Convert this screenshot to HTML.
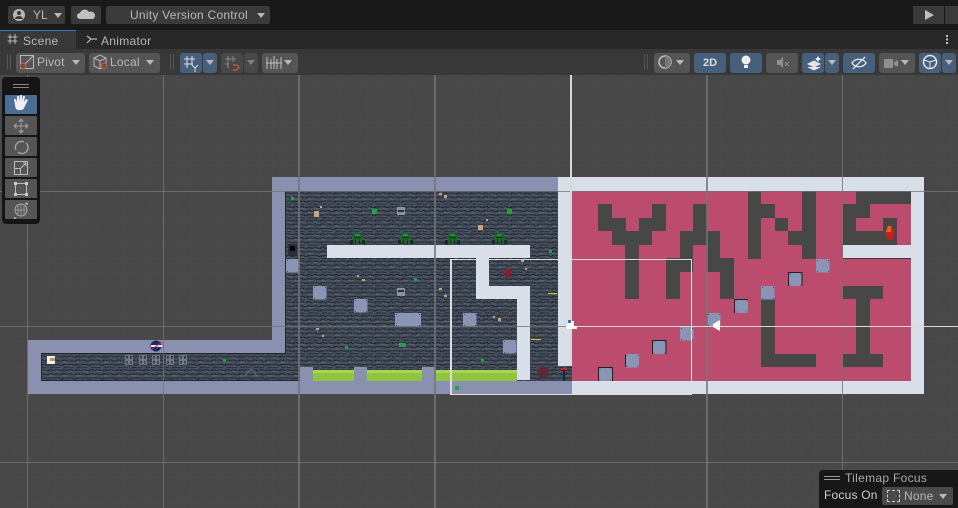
<!DOCTYPE html>
<html><head><meta charset="utf-8">
<style>
html,body{margin:0;padding:0;background:#484848}
#r{position:relative;width:958px;height:508px;overflow:hidden;font-family:"Liberation Sans",sans-serif;color:#b8b8b8;font-size:12px}
.a{position:absolute}
.b{position:absolute;height:20px;background:#555;border-radius:3px;top:53px}
.bl{background:#46607c}
.t{position:absolute;white-space:nowrap;line-height:14px}
.c{position:absolute;width:0;height:0;border-left:4px solid transparent;border-right:4px solid transparent;border-top:5px solid #b8b8b8}
.tb{position:absolute;left:5px;width:32px;height:19px;background:#555;border-radius:1px}
svg{position:absolute;left:0;top:0;overflow:visible}
</style></head><body><div id="r">
<svg width="958" height="508" viewBox="0 0 958 508" shape-rendering="crispEdges">
<defs>
<pattern id="minor" width="13.57" height="13.57" patternUnits="userSpaceOnUse" patternTransform="translate(1.1 1.1)">
<path d="M0 0H13.57M0 0V13.57" stroke="#4b4b4b" stroke-width="1" fill="none"/>
</pattern>
<pattern id="tex" width="13.6" height="13.6" patternUnits="userSpaceOnUse" patternTransform="translate(286 191)">
<rect width="14" height="14" fill="#454e5c"/>
<path d="M0 2h4v1h4v-1h3v1h3M0 6h3v1h5v-1h3v1h3M0 10h5v1h3v-1h6M1 13h4v1h4v-1h5" stroke="#262a32" stroke-width="1" fill="none"/>
<path d="M1 4h5M8 8h5M2 12h4" stroke="#566071" stroke-width="1" fill="none"/>
</pattern>
<symbol id="k" width="14" height="14" viewBox="0 0 14 14" overflow="visible">
<rect width="13.500" height="13.500" fill="#8a94b4"/>
<g fill="#4a4e58"><rect x="1" y="1" width="1" height="1"/><rect x="12" y="1" width="1" height="1"/><rect x="1" y="12" width="1" height="1"/><rect x="12" y="12" width="1" height="1"/></g>
</symbol>
<symbol id="sp" width="17" height="12" viewBox="0 0 17 12" overflow="visible">
<rect x="4" y="0" width="9" height="4" fill="#1a5f28"/><rect x="3" y="3" width="11" height="6" fill="#1b6a2b"/><rect x="6" y="1" width="5" height="2" fill="#2a8a3c"/>
<g fill="#0f3318"><rect x="1" y="7" width="3" height="4"/><rect x="13" y="7" width="3" height="4"/><rect x="6" y="6" width="1" height="5"/><rect x="10" y="6" width="1" height="5"/><rect x="5" y="4" width="7" height="1"/></g>
</symbol>
</defs>
<rect width="958" height="508" fill="#484848"/>
<rect width="958" height="508" fill="url(#minor)"/>
<!-- dark background -->
<rect x="41" y="353" width="245" height="28" fill="url(#tex)"/>
<rect x="286" y="191" width="286" height="190" fill="url(#tex)"/>
<!-- purple walls -->
<g fill="#8a90b0">
<rect x="272" y="177" width="286" height="14"/>
<rect x="272" y="177" width="14" height="176"/>
<rect x="28" y="340" width="258" height="13"/>
<rect x="28" y="340" width="13" height="54"/>
<rect x="28" y="381" width="544" height="13"/>
<rect x="300" y="367" width="13" height="14"/><rect x="354" y="367" width="13" height="14"/><rect x="422" y="367" width="13" height="14"/>
</g>
<g fill="#23262c"><rect x="285" y="191" width="1" height="162"/><rect x="41" y="353" width="245" height="1"/><rect x="41" y="380" width="259" height="1"/><rect x="41" y="353" width="1" height="28"/><rect x="286" y="191" width="272" height="1"/></g>
<use href="#k" x="286" y="259"/><use href="#k" x="313" y="286"/><use href="#k" x="354" y="299"/><use href="#k" x="463" y="313"/><use href="#k" x="503" y="340"/>
<rect x="395" y="313" width="26" height="13.500" fill="#8a94b4"/>
<g fill="#4a4e58"><rect x="396" y="314" width="1" height="1"/><rect x="419" y="314" width="1" height="1"/><rect x="396" y="325" width="1" height="1"/><rect x="419" y="325" width="1" height="1"/></g>
<!-- acid -->
<g fill="#8fc542"><rect x="313" y="371" width="41" height="10"/><rect x="367" y="371" width="55" height="10"/><rect x="435" y="371" width="82" height="10"/></g>
<g fill="#a9d64f"><rect x="313" y="370" width="41" height="3"/><rect x="367" y="370" width="55" height="3"/><rect x="435" y="370" width="82" height="3"/></g>
<!-- pink room -->
<rect x="572" y="191" width="339" height="190" fill="#bb4c6e"/>
<g fill="#474747">
<rect x="598" y="204" width="14" height="27"/><rect x="612" y="218" width="14" height="27"/><rect x="625" y="231" width="14" height="68"/><rect x="639" y="218" width="13" height="27"/><rect x="652" y="204" width="14" height="27"/>
<rect x="693" y="204" width="14" height="41"/><rect x="680" y="231" width="13" height="41"/><rect x="666" y="258" width="14" height="41"/><rect x="707" y="231" width="13" height="41"/><rect x="720" y="258" width="14" height="41"/>
<rect x="748" y="191" width="13" height="68"/><rect x="761" y="204" width="14" height="14"/><rect x="775" y="218" width="13" height="13"/><rect x="788" y="231" width="14" height="14"/><rect x="802" y="191" width="14" height="68"/>
<rect x="856" y="191" width="55" height="13"/><rect x="843" y="204" width="27" height="14"/><rect x="843" y="218" width="13" height="13"/><rect x="843" y="231" width="54" height="14"/><rect x="883" y="218" width="14" height="13"/>
<rect x="761" y="299" width="14" height="68"/><rect x="775" y="354" width="41" height="13"/>
<rect x="843" y="286" width="40" height="13"/><rect x="856" y="299" width="14" height="55"/><rect x="843" y="354" width="40" height="13"/>
</g>
<!-- white walls -->
<g fill="#d9dfe9">
<rect x="558" y="177" width="366" height="14"/><rect x="911" y="177" width="13" height="217"/><rect x="572" y="381" width="352" height="13"/>
<rect x="558" y="191" width="14" height="175"/>
<rect x="843" y="245" width="68" height="13"/>
<rect x="327" y="245" width="203" height="13"/><rect x="476" y="258" width="13" height="41"/><rect x="476" y="286" width="54" height="13"/><rect x="517" y="286" width="13" height="94"/>
</g>
<rect x="843" y="258" width="68" height="1" fill="#3a3a3a"/>
<!-- blocks in pink -->
<use href="#k" x="598.500" y="367.500"/><use href="#k" x="625.500" y="354"/><use href="#k" x="652.500" y="340.500"/><use href="#k" x="680" y="327"/><use href="#k" x="707" y="313"/><use href="#k" x="734.500" y="299.500"/><use href="#k" x="761" y="286"/><use href="#k" x="816" y="259"/><use href="#k" x="788.500" y="272.500"/>
<g fill="none" stroke="#202228" stroke-width="1">
<path d="M598.500 381V367.500H612.500V381M625.500 367V354.500M652.500 354V340.500H666V354M734.500 313V299.500H748M788.500 286V272.500H802V286"/>
</g>
<!-- objects -->
<use href="#sp" x="349" y="233"/><use href="#sp" x="397" y="233"/><use href="#sp" x="444" y="233"/><use href="#sp" x="491" y="233"/>
<g fill="#1fa53a"><rect x="372" y="209" width="5" height="5"/><rect x="507" y="209" width="5" height="5"/><rect x="414" y="278" width="3" height="3"/><rect x="291" y="197" width="3" height="3"/><rect x="549" y="250" width="3" height="3"/><rect x="345" y="346" width="3" height="3"/><rect x="481" y="359" width="3" height="3"/><rect x="223" y="359" width="3" height="3"/><rect x="455" y="386" width="4" height="4"/></g>
<g><rect x="397" y="207" width="8" height="8" fill="#8b90a8"/><rect x="398" y="210" width="6" height="2" fill="#2a2d36"/><rect x="397" y="288" width="8" height="8" fill="#8b90a8"/><rect x="398" y="290" width="6" height="2" fill="#2a2d36"/></g>
<g fill="#c9a47d"><rect x="314" y="211" width="5" height="6"/><rect x="478" y="225" width="5" height="5"/><rect x="320" y="206" width="2" height="2"/><rect x="486" y="219" width="2" height="2"/><rect x="444" y="195" width="3" height="3"/><rect x="439" y="193" width="3" height="2"/><rect x="362" y="279" width="3" height="2"/><rect x="357" y="275" width="2" height="2"/><rect x="439" y="288" width="3" height="2"/><rect x="444" y="295" width="3" height="2"/><rect x="498" y="318" width="3" height="3"/><rect x="493" y="316" width="2" height="2"/><rect x="316" y="328" width="3" height="2"/><rect x="322" y="335" width="2" height="2"/><rect x="521" y="260" width="3" height="2"/><rect x="525" y="268" width="2" height="2"/></g>
<rect x="288" y="244" width="9" height="12" fill="#2a2e36"/><rect x="290" y="246" width="5" height="5" fill="#000"/>
<rect x="505" y="269" width="6" height="8" fill="#8c1c2c"/>
<g fill="#2d9a62"><rect x="399" y="343" width="7" height="4"/></g>
<g fill="#d8c23a"><rect x="548" y="293" width="9" height="1"/><rect x="531" y="339" width="10" height="1"/></g>
<g fill="#5a2a38"><circle cx="543" cy="372" r="6"/></g>
<rect x="561" y="368" width="6" height="2" fill="#d81e26"/><rect x="563" y="370" width="2" height="11" fill="#1c2a2a"/>
<path d="M887 226h5l2 5v7l-3 2h-3l-2-4z" fill="#c32020" shape-rendering="auto"/><path d="M888 226h3v6h-5z" fill="#ea6018" shape-rendering="auto"/>
<!-- astronaut & badge -->
<rect x="47" y="356" width="8" height="8" fill="#eee"/><rect x="50" y="358" width="5" height="3" fill="#d2923f"/>
<circle cx="156" cy="346" r="5.500" fill="#1c2a66" shape-rendering="auto"/><rect x="151" y="345" width="11" height="2" fill="#e9e9f2"/><path d="M151 350L162 342" stroke="#d8232a" stroke-width="1" shape-rendering="auto"/>
<g fill="none" stroke="#737887">
<path d="M125.500 355.500h3v4h-3zM129.500 355.500h3v4h-3zM125.500 360.500h3v4h-3zM129.500 360.500h3v4h-3z"/>
<path d="M139.500 355.500h3v4h-3zM143.500 355.500h3v4h-3zM139.500 360.500h3v4h-3zM143.500 360.500h3v4h-3z"/>
<path d="M152.500 355.500h3v4h-3zM156.500 355.500h3v4h-3zM152.500 360.500h3v4h-3zM156.500 360.500h3v4h-3z"/>
<path d="M166.500 355.500h3v4h-3zM170.500 355.500h3v4h-3zM166.500 360.500h3v4h-3zM170.500 360.500h3v4h-3z"/>
<path d="M179.500 355.500h3v4h-3zM183.500 355.500h3v4h-3zM179.500 360.500h3v4h-3zM183.500 360.500h3v4h-3z"/>
</g>
<path d="M245 376l3-4 3-3 3 3 3 4" fill="none" stroke="#5f6e6e"/>
<!-- grid lines over the level -->
<g fill="#747474" fill-opacity=".8">
<rect x="27" y="75" width="1" height="433"/><rect x="163" y="75" width="1" height="433"/><rect x="842" y="75" width="1" height="433"/>
<rect x="0" y="191" width="958" height="1"/><rect x="0" y="326" width="571" height="1"/><rect x="0" y="462" width="958" height="1"/>
<rect x="298" y="75" width="2" height="433"/><rect x="434" y="75" width="2" height="433"/><rect x="706" y="75" width="2" height="433"/>
</g>
<!-- white gizmo lines -->
<rect x="570" y="75" width="2" height="290" fill="#d8d8d8"/>
<rect x="571" y="326" width="387" height="1" fill="#e0d8dc"/>
<g fill="#dcdcdc"><rect x="450" y="259" width="242" height="1"/><rect x="450" y="259" width="2" height="135"/><rect x="691" y="259" width="1" height="135"/><rect x="450" y="394" width="242" height="1"/></g>
<path d="M566 326l4-5h4v5h3v3h-10z" fill="#fff" shape-rendering="auto"/><rect x="568" y="320" width="3" height="3" fill="#3b6fc0"/>
<path d="M720 320v11l-7-4v-3z" fill="#fff" shape-rendering="auto"/>
</svg>

<!-- toolbars -->
<div class="a" style="left:0;top:0;width:958px;height:30px;background:#191919"></div>
<div class="a" style="left:0;top:30px;width:958px;height:19px;background:#282828"></div>
<div class="a" style="left:0;top:49px;width:958px;height:26px;background:#383838"></div>
<div class="a" style="left:0;top:30px;width:76px;height:19px;background:#383838;border-top:1px solid #3a79bb;box-sizing:border-box"></div>

<div class="a" style="left:8px;top:6px;width:57px;height:18px;background:#3a3a3a;border-radius:2px"></div>
<div class="a" style="left:71px;top:6px;width:30px;height:18px;background:#3a3a3a;border-radius:2px"></div>
<div class="a" style="left:106px;top:6px;width:164px;height:18px;background:#3a3a3a;border-radius:2px"></div>
<div class="a" style="left:913px;top:6px;width:31px;height:18px;background:#3a3a3a"></div>
<div class="a" style="left:945px;top:6px;width:13px;height:18px;background:#3a3a3a"></div>
<svg width="958" height="80">
<circle cx="19" cy="15" r="6" fill="#b8b8b8"/><circle cx="19" cy="13" r="2" fill="#3a3a3a"/><path d="M15 19a4 3 0 0 1 8 0z" fill="#3a3a3a"/>
<path d="M80 19a3 3 0 0 1 0-6a5 5 0 0 1 9-1a4 4 0 0 1 4 7z" fill="#c0c0c0"/>
<path d="M925 10v10l9-5z" fill="#c0c0c0"/>
<!-- tab icons -->
<path d="M10 34v10M15 34v10M7.500 37h10M7.500 41h10" stroke="#b8b8b8" fill="none"/>
<path d="M87 36l4 3-4 4M91 39h6" stroke="#b8b8b8" fill="none" stroke-width="1.200"/>
<g fill="#c4c4c4"><rect x="946" y="35" width="2" height="2"/><rect x="946" y="38.500" width="2" height="2"/><rect x="946" y="42" width="2" height="2"/></g>
<g fill="#555"><rect x="7" y="54" width="1" height="16"/><rect x="10" y="54" width="1" height="16"/><rect x="170" y="54" width="1" height="16"/><rect x="173" y="54" width="1" height="16"/><rect x="644" y="54" width="1" height="16"/><rect x="647" y="54" width="1" height="16"/></g>
</svg>
<div class="t" style="left:33px;top:8px">YL</div><div class="c" style="left:54px;top:13px"></div>
<div class="t" style="left:130px;top:8px;letter-spacing:.25px">Unity Version Control</div><div class="c" style="left:257px;top:13px"></div>
<div class="t" style="left:23px;top:34px;letter-spacing:.3px">Scene</div>
<div class="t" style="left:101px;top:34px;letter-spacing:.3px">Animator</div>

<div class="b" style="left:16px;width:69px"></div><div class="t" style="left:37px;top:55px;letter-spacing:.2px">Pivot</div><div class="c" style="left:72px;top:60px"></div>
<div class="b" style="left:89px;width:71px"></div><div class="t" style="left:110px;top:55px;letter-spacing:.2px">Local</div><div class="c" style="left:146px;top:60px"></div>
<div class="b bl" style="left:180px;width:22px"></div><div class="b bl" style="left:203px;width:14px"></div><div class="c" style="left:206px;top:60px"></div>
<div class="b" style="left:221px;width:22px;background:#484848"></div><div class="b" style="left:244px;width:14px;background:#484848"></div><div class="c" style="left:247px;top:60px;border-top-color:#808080"></div>
<div class="b" style="left:262px;width:36px"></div><div class="c" style="left:284px;top:60px"></div>

<div class="b" style="left:654px;width:36px"></div><div class="c" style="left:676px;top:60px"></div>
<div class="b bl" style="left:694px;width:32px;text-align:center;line-height:20px;font-weight:bold;font-size:11px;color:#ddd">2D</div>
<div class="b bl" style="left:730px;width:32px"></div>
<div class="b" style="left:766px;width:32px"></div>
<div class="b bl" style="left:802px;width:22px"></div><div class="b bl" style="left:825px;width:14px"></div><div class="c" style="left:828px;top:60px"></div>
<div class="b bl" style="left:843px;width:32px"></div>
<div class="b" style="left:879px;width:36px"></div><div class="c" style="left:901px;top:60px"></div>
<div class="b bl" style="left:919px;width:22px"></div><div class="b bl" style="left:942px;width:14px"></div><div class="c" style="left:945px;top:60px"></div>

<svg width="958" height="80" style="z-index:2">
<path d="M20.500 68.500V55.500H33.500V68.500ZM23 66L33 56" fill="none" stroke="#b8b8b8"/><circle cx="23" cy="66" r="2.800" fill="#555" stroke="#d4562c" stroke-width="1.200"/>
<path d="M94 58l6-3 6 3v8l-6 3-6-3zM94 58l6 3 6-3M100 61v8" fill="none" stroke="#b8b8b8"/><circle cx="104" cy="66" r="2.800" fill="#555" stroke="#d4562c" stroke-width="1.200"/>
<path d="M187 56v12M192 56v9M184 59h11M184 64h9" stroke="#e0e0e0" fill="none"/><path d="M192 65l3 3 3-3M195 68v4" stroke="#e0e0e0" fill="none"/>
<path d="M228 56v12M233 56v6M225 59h11M225 64h4" stroke="#8a8a8a" fill="none"/><path d="M233 65h3a2 2 0 0 1 0 5h-3" stroke="#b85a38" fill="none" stroke-width="1.500"/>
<path d="M267 57v12M271 59v10M274 56v13M277 59v10M281 57v12M266 63h16" stroke="#c0c0c0" fill="none"/>
<circle cx="665" cy="62" r="6" fill="none" stroke="#c0c0c0" stroke-width="1.500"/><path d="M665 56a6 6 0 0 1 6 6a6 6 0 0 1-6 6" fill="#777"/>
<circle cx="746" cy="60" r="4.500" fill="#eee"/><rect x="744" y="65" width="4" height="3" fill="#eee"/>
<path d="M777 60h3l3-3v11l-3-3h-3z" fill="#8f8f8f"/><path d="M785 62l4 4M789 62l-4 4" stroke="#8f8f8f" fill="none"/>
<path d="M808 64l6-3 6 3-6 3zM808 67l6 3 6-3" fill="#e4e4e4" stroke="#e4e4e4"/><path d="M818 56l1 2 2 1-2 1-1 2-1-2-2-1 2-1z" fill="#fff"/>
<path d="M852 63c3-5 11-5 14 0c-3 5-11 5-14 0zM853 69l12-12" fill="none" stroke="#e4e4e4" stroke-width="1.300"/>
<path d="M884 59h9v9h-9zM894 62l4-2v7l-4-2z" fill="#8f8f8f"/>
<circle cx="930" cy="62" r="6.500" fill="none" stroke="#e8e8e8" stroke-width="1.500"/><path d="M924 60l6 2 6-2M930 62v6" fill="none" stroke="#e8e8e8"/>
</svg>

<!-- tool palette -->
<div class="a" style="left:2px;top:77px;width:38px;height:147px;background:#151515;border-radius:4px"></div>
<div class="a" style="left:13px;top:84px;width:16px;height:1px;background:#888"></div>
<div class="a" style="left:13px;top:87px;width:16px;height:1px;background:#888"></div>
<div class="tb" style="top:95px;background:#4a6d93"></div>
<div class="tb" style="top:116px"></div><div class="tb" style="top:137px"></div><div class="tb" style="top:158px"></div><div class="tb" style="top:179px"></div><div class="tb" style="top:200px"></div>
<svg width="60" height="230" style="z-index:3">
<path d="M15 105l-1-6 2 0 1 3 0-6h2l1 5 0-6h2l0 6 1-5h2l-1 6 2-3 2 1-4 8q-1 2-3 2h-3q-2 0-3-4z" fill="#eee"/>
<path d="M21 120v12M15 126h12M21 119l-2 2h4zM21 133l-2-2h4zM14 126l2-2v4zM28 126l-2-2v4z" fill="#999" stroke="#999"/>
<path d="M16 150a6 6 0 0 1 8-8M26 143a6 6 0 0 1-8 9" fill="none" stroke="#aaa" stroke-width="1.300"/>
<rect x="14.500" y="161.500" width="13" height="13" fill="none" stroke="#bbb"/><rect x="14.500" y="168.500" width="6" height="6" fill="none" stroke="#bbb"/><path d="M21 168l5-5M23 163h3v3" fill="none" stroke="#bbb"/>
<rect x="15.500" y="183.500" width="11" height="11" fill="none" stroke="#bbb"/><g fill="#ccc"><rect x="14" y="182" width="3" height="3"/><rect x="25" y="182" width="3" height="3"/><rect x="14" y="193" width="3" height="3"/><rect x="25" y="193" width="3" height="3"/></g>
<circle cx="21" cy="210" r="6" fill="none" stroke="#aaa"/><path d="M15 210h12M21 204v12M18 205v10M24 205v10" fill="none" stroke="#999"/><path d="M27 202l1 3-3-1zM14 217l3 1-3 1z" fill="#ccc"/>
</svg>

<!-- tilemap focus -->
<div class="a" style="left:819px;top:470px;width:139px;height:38px;background:#171717;border-radius:4px 0 0 0"></div>
<div class="a" style="left:824px;top:476px;width:16px;height:1px;background:#999"></div>
<div class="a" style="left:824px;top:479px;width:16px;height:1px;background:#999"></div>
<div class="t" style="left:845px;top:471px;color:#a8a8a8;letter-spacing:.3px">Tilemap Focus</div>
<div class="t" style="left:824px;top:488px;color:#d0d0d0;letter-spacing:.2px">Focus On</div>
<div class="a" style="left:882px;top:487px;width:71px;height:18px;background:#4a4a4a;border-radius:2px"></div>
<div class="a" style="left:887px;top:490px;width:11px;height:10px;border:1px dashed #c8c8c8"></div>
<div class="t" style="left:904px;top:489px;color:#b8b8b8;letter-spacing:.2px">None</div>
<div class="c" style="left:939px;top:494px"></div>
</div></body></html>
